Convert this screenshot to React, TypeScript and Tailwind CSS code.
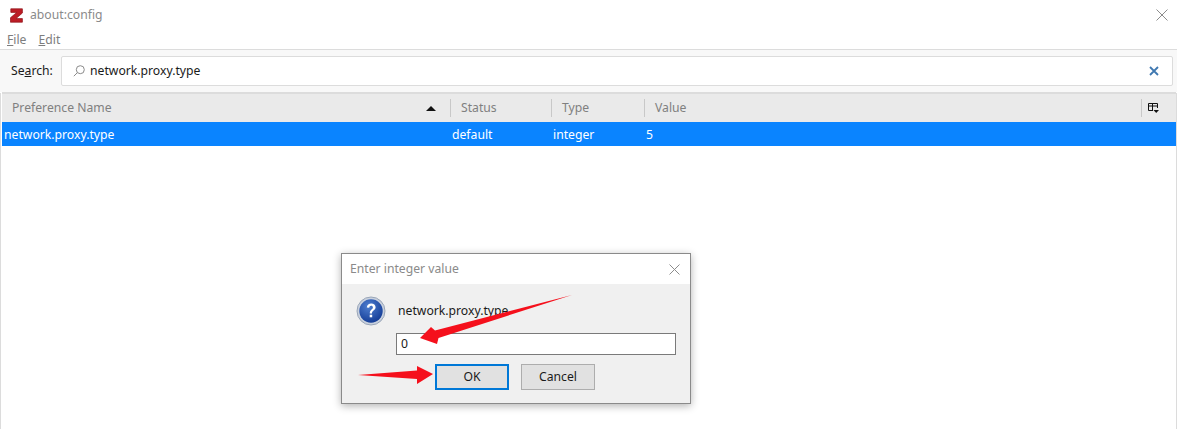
import React from "react";

const font = { fontFamily: '"Noto Sans", "Open Sans", sans-serif' };

function Logo() {
  return (
    <svg width="13" height="15" viewBox="0 0 13 15" className="shrink-0">
      <path d="M0.8 0.8H12.4V5L6 10.6H12.4V14.2H0.4V9.8L6.8 4.4H0.8Z" fill="#bd1c25" stroke="#8e1218" strokeWidth="0.7" />
    </svg>
  );
}

function Header({ w, label }: { w: string; label: string }) {
  return (
    <div className={`${w} h-full flex items-center`}>
      <div className="w-px h-[18px] bg-[#c8c8c8] shrink-0" />
      <span className="ml-[10px] text-[#808080]">{label}</span>
    </div>
  );
}

function QuestionIcon() {
  return (
    <svg width="30" height="30" viewBox="0 0 30 30" className="shrink-0">
      <defs>
        <radialGradient id="q" cx="40%" cy="30%" r="75%">
          <stop offset="0%" stopColor="#4f7fd0" />
          <stop offset="100%" stopColor="#123a94" />
        </radialGradient>
      </defs>
      <circle cx="15" cy="15" r="14" fill="#c9d1de" stroke="#9aa6b8" />
      <circle cx="15" cy="15" r="11.7" fill="url(#q)" />
      <path d="M10.8 11.6C11 8.8 13 7.6 15.2 7.6C17.8 7.6 19.6 9.1 19.6 11.3C19.6 14.3 16 14.4 16 17.4H13.8C13.6 13.6 16.9 13.4 16.9 11.4C16.9 10.4 16.2 9.8 15.1 9.8C14 9.8 13.4 10.5 13.2 11.8Z" fill="#fff" />
      <rect x="13.7" y="18.7" width="2.5" height="2.6" fill="#fff" />
    </svg>
  );
}

export default function App() {
  return (
    <div className="relative w-[1177px] h-[429px] overflow-hidden bg-white text-[12.2px] text-[#1a1a1a]" style={font}>
      <div className="h-[30px] flex items-center pl-[10px] pr-[9px]">
        <Logo />
        <span className="ml-[7px] text-[#8a8a8a]">about:config</span>
        <svg width="12" height="12" viewBox="0 0 12 12" className="ml-auto" stroke="#8c8c8c" fill="none">
          <path d="M0.5 0.5L11.5 11.5M11.5 0.5L0.5 11.5" />
        </svg>
      </div>
      <div className="h-[19px] pt-[2px] flex items-center gap-[12px] pl-[7px] text-[#7d7d7d]">
        <span><span className="underline">F</span>ile</span>
        <span><span className="underline">E</span>dit</span>
      </div>
      <div className="h-[43px] border-t border-[#dcdcdc] bg-[#f8f8f8] flex items-center pl-[11px] pr-[4px]">
        <span className="w-[50px] text-[#1a1a1a]">Se<span className="underline">a</span>rch:</span>
        <div className="flex-1 h-[30px] bg-white border border-[#dcdcdc] rounded-[2px] flex items-center pl-[11px] pr-[13px]">
          <svg width="12" height="12" viewBox="0 0 12 12" fill="none" stroke="#8a8a8a">
            <circle cx="7.3" cy="4.7" r="4" />
            <path d="M4.4 7.6L0.8 11.2" />
          </svg>
          <span className="ml-[5px]">network.proxy.type</span>
          <svg width="10" height="10" viewBox="0 0 10 10" className="ml-auto" stroke="#3f78b0" strokeWidth="1.8" fill="none">
            <path d="M1 1L9 9M9 1L1 9" />
          </svg>
        </div>
      </div>
      <div className="ml-[2px] mr-[1px] border-t-2 border-[#dcdcdc] h-[30px] bg-[#eaeaea] flex items-center">
        <div className="w-[448px] h-full flex items-center pl-[10px]">
          <span className="text-[#808080]">Preference Name</span>
          <svg width="10" height="5" viewBox="0 0 10 5" className="ml-auto mr-[14px]">
            <path d="M5 0L10 5H0Z" fill="#111" />
          </svg>
        </div>
        <Header w="w-[101px]" label="Status" />
        <Header w="w-[93px]" label="Type" />
        <Header w="w-[497px]" label="Value" />
        <div className="w-px h-[18px] bg-[#c8c8c8] shrink-0" />
        <svg width="11" height="10" viewBox="0 0 11 10" className="ml-[6px]" fill="none" stroke="#111">
          <path d="M0.5 7.5V0.5H9.5V5M0.5 3H9.5M4.5 0.5V7.5M0.5 7.5H5" />
          <path d="M5.5 7H11L8.2 10Z" fill="#111" stroke="none" />
        </svg>
      </div>
      <div className="ml-[2px] mr-[1px] h-[24px] pt-[2px] bg-[#0a84ff] text-white flex items-center">
        <span className="w-[450px] pl-[2px]">network.proxy.type</span>
        <span className="w-[101px]">default</span>
        <span className="w-[93px]">integer</span>
        <span>5</span>
      </div>

      <div className="absolute left-0 top-[93px] bottom-0 w-px bg-[#dcdcdc]" />
      <div className="absolute right-0 top-[93px] bottom-0 w-px bg-[#dcdcdc]" />

      <div className="absolute left-[341px] top-[253px] w-[350px] h-[151px] bg-[#f0f0f0] border border-[#8a8a8a] shadow-[0_2px_8px_rgba(0,0,0,0.3)]">
        <div className="h-[30px] bg-white flex items-center pl-[8px] pr-[10px]">
          <span className="text-[#8a8a8a]">Enter integer value</span>
          <svg width="11" height="11" viewBox="0 0 11 11" className="ml-auto" stroke="#8c8c8c" fill="none">
            <path d="M0.5 0.5L10.5 10.5M10.5 0.5L0.5 10.5" />
          </svg>
        </div>
        <div className="flex items-center pl-[14px] pt-[12px]">
          <QuestionIcon />
          <span className="ml-[12px] mt-[1px]">network.proxy.type</span>
        </div>
        <div className="ml-[54px] mt-[7px] w-[280px] h-[22px] bg-white border border-[#7a7a7a] flex items-center pl-[4px]">0</div>
        <div className="flex gap-[12px] ml-[93px] mt-[9px]">
          <div className="w-[74px] h-[26px] bg-[#e1e1e1] border-2 border-[#0078d7] flex items-center justify-center">OK</div>
          <div className="w-[74px] h-[26px] bg-[#e1e1e1] border border-[#adadad] flex items-center justify-center">Cancel</div>
        </div>
      </div>

      <svg className="absolute inset-0 pointer-events-none" width="1177" height="429" viewBox="0 0 1177 429">
        <path d="M572 295L435 330.5L431 327L420 338L437 344L438.5 338Z" fill="#f5101c" />
        <path d="M358 375L417 370.5L417 366L433 374L417 384L417 379Z" fill="#f5101c" />
      </svg>
    </div>
  );
}
